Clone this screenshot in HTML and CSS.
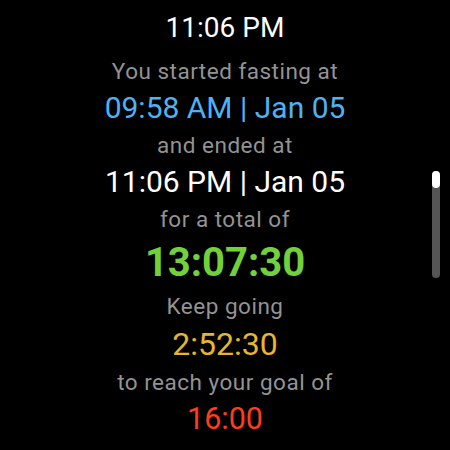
FILE: index.html
```html
<!DOCTYPE html>
<html>
<head>
<meta charset="utf-8">
<link rel="stylesheet" href="styles.css">
</head>
<body>
<div class="screen">
  <div class="summary">
    <div class="clock">11:06 PM</div>
    <div class="label first">You started fasting at</div>
    <div class="value blue">09:58 AM | Jan 05</div>
    <div class="label">and ended at</div>
    <div class="value white">11:06 PM | Jan 05</div>
    <div class="label">for a total of</div>
    <div class="total">13:07:30</div>
    <div class="label">Keep going</div>
    <div class="value yellow">2:52:30</div>
    <div class="label">to reach your goal of</div>
    <div class="value red">16:00</div>
  </div>
  <div class="scrollbar"><div class="thumb"></div></div>
</div>
</body>
</html>
```
FILE: styles.css
```css
html, body {
  margin: 0;
  padding: 0;
  background: #000;
}
.screen {
  position: relative;
  width: 450px;
  height: 450px;
  overflow: hidden;
  background: #000;
  font-family: Roboto, "Liberation Sans", sans-serif;
}
.summary {
  display: flex;
  flex-direction: column;
  align-items: center;
  padding-top: 9px;
}
.clock {
  font-size: 28px;
  line-height: 37px;
  color: #ffffff;
}
.label {
  font-size: 22.5px;
  line-height: 36px;
  letter-spacing: 0.5px;
  color: #939393;
}
.label.first {
  margin-top: 7px;
}
.value {
  font-size: 30px;
  line-height: 38px;
}
.blue { color: #4db3f5; }
.white { color: #ffffff; }
.yellow {
  color: #e8b530;
  font-size: 32px;
  line-height: 40px;
}
.red {
  color: #ff3d1c;
  font-size: 30.5px;
}
.total {
  font-size: 40px;
  font-weight: 700;
  line-height: 51px;
  color: #72d13a;
}
.scrollbar {
  position: absolute;
  left: 432px;
  top: 171px;
  width: 8px;
  height: 107px;
  border-radius: 4px;
  background: #555555;
}
.thumb {
  width: 8px;
  height: 17px;
  border-radius: 4px;
  background: #ffffff;
}
```
